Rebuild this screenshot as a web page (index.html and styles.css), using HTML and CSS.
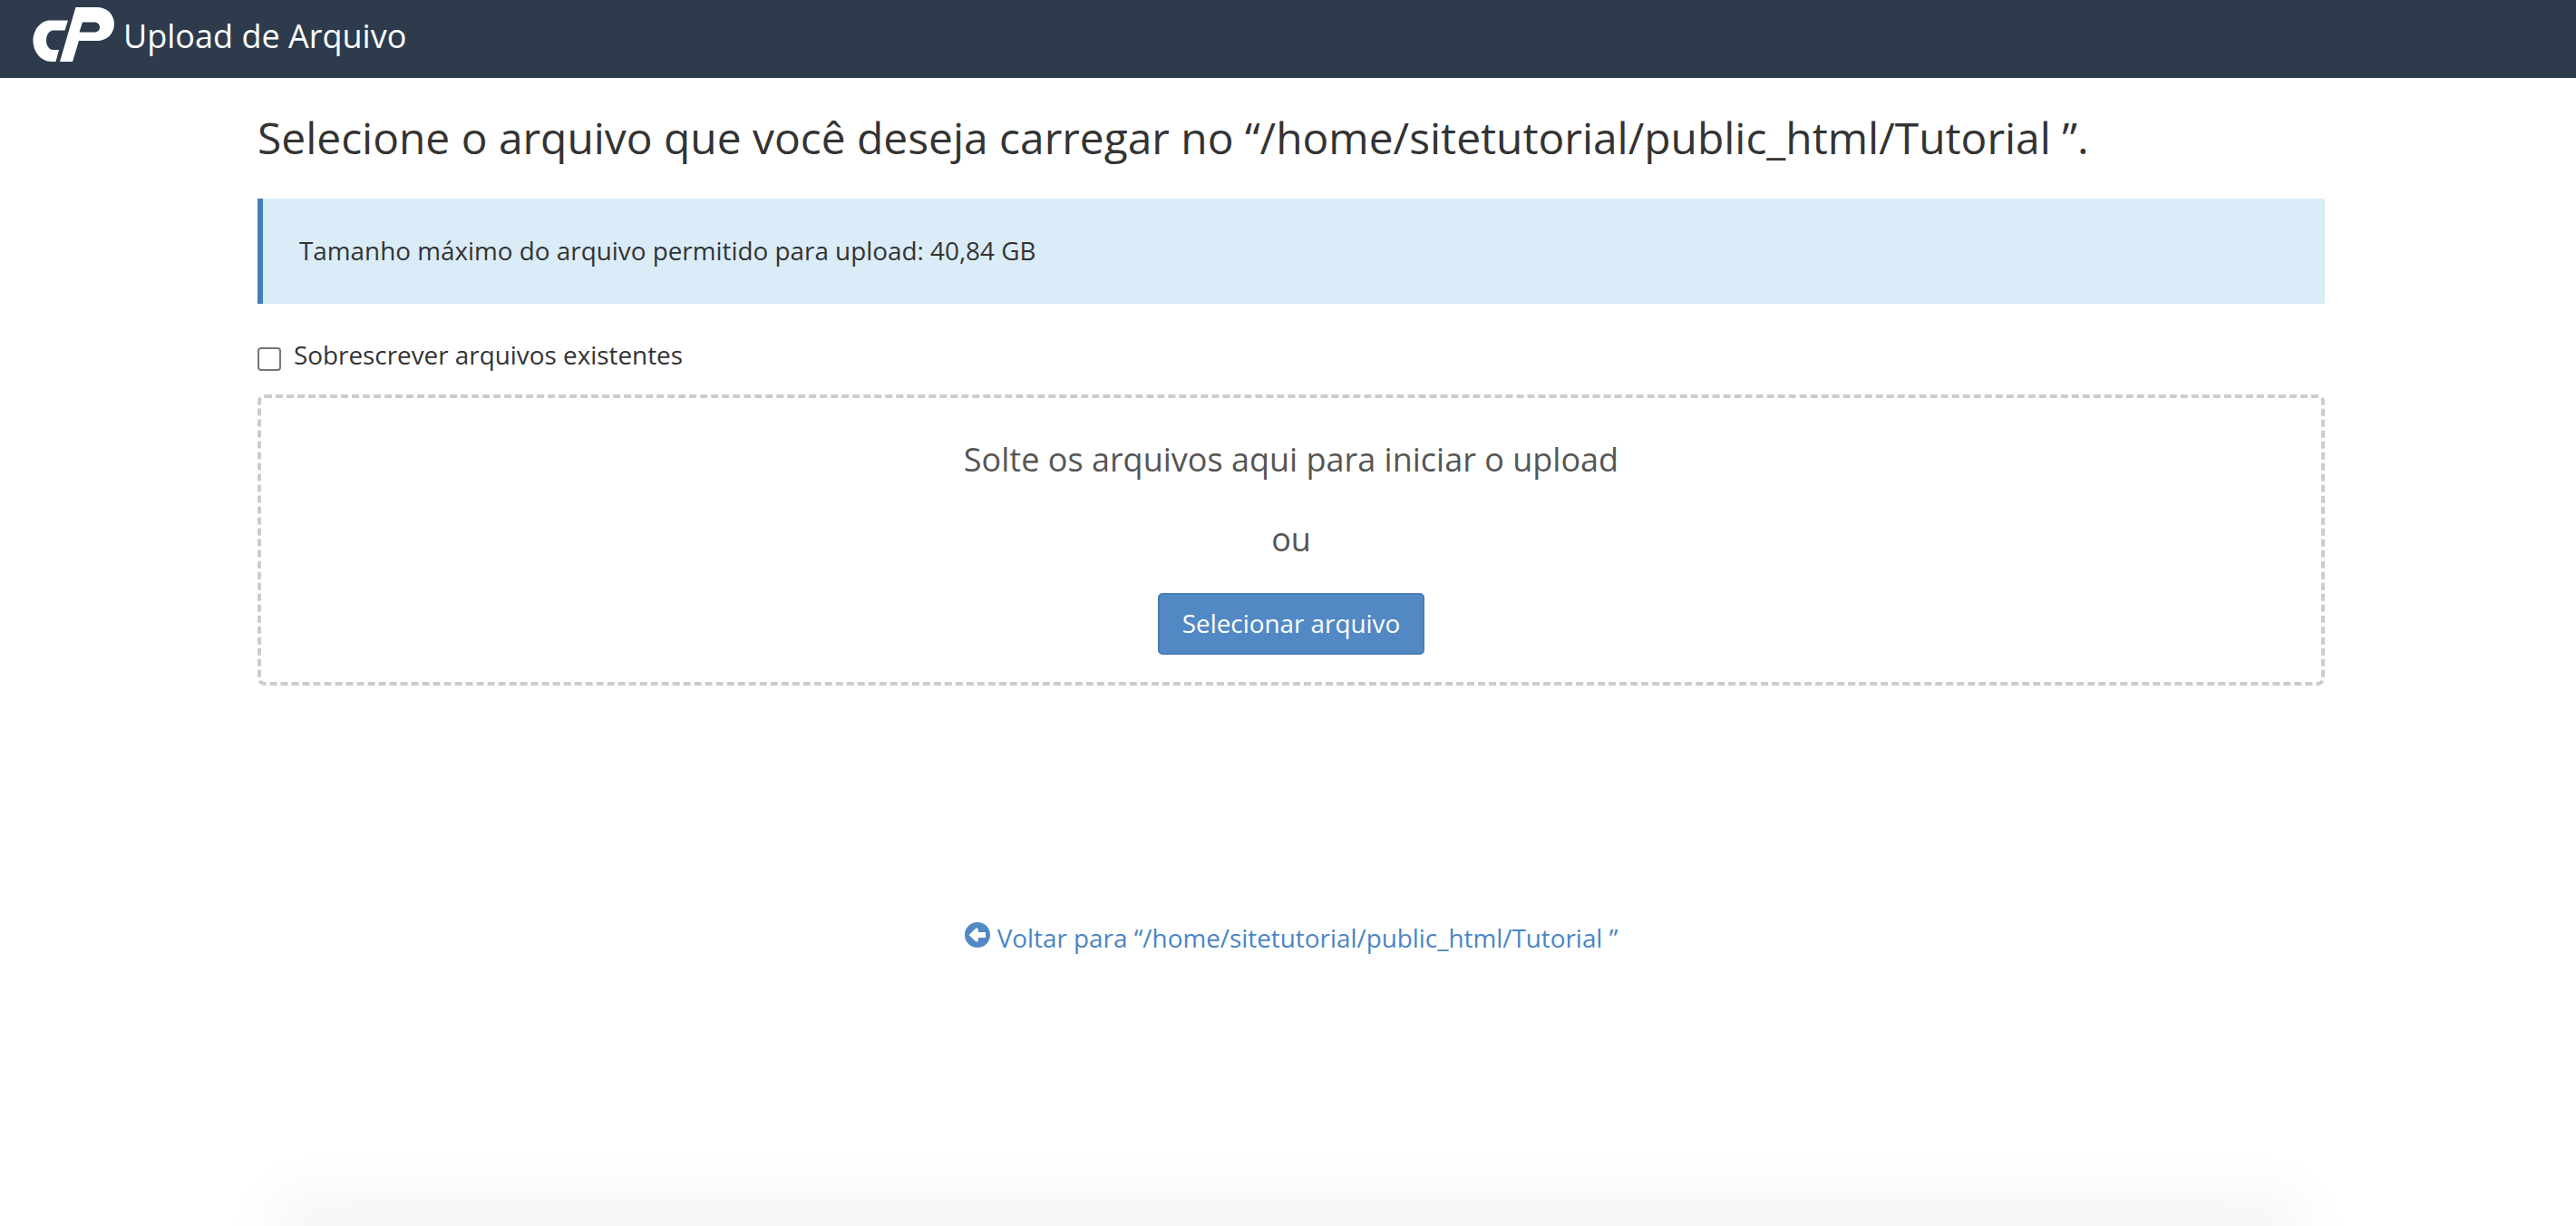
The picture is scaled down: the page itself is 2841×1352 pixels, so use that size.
FILE: index.html
```html
<!DOCTYPE html>
<html lang="pt-BR">
<head>
  <meta charset="UTF-8">
  <title>Upload de Arquivo</title>
  <link rel="stylesheet" href="styles.css">
</head>
<body>
  <header class="topbar">
    <svg class="logo" viewBox="0 0 90 60" aria-hidden="true">
      <path fill="#fff" d="M19 14.500H39L35.500 25.500H23C18 25.500 15 31 15 36.500C15 42 18 47 23 47H29L25.500 60H21C9 60 0.500 49 0.500 37C0.500 25 9 14.500 19 14.500Z"/>
      <path fill="#fff" fill-rule="evenodd" d="M47.500 0H71C82 0 90 8 90 18.500C90 29 82 37 71 37H51L44 60H30ZM55 16.500L51.500 27.500H68C72 27.500 74 25 74 22C74 19 72 16.500 68 16.500Z"/>
    </svg>
    <span class="topbar-title">Upload de Arquivo</span>
  </header>

  <main class="content">
    <h1>Selecione o arquivo que você deseja carregar no “/home/sitetutorial/public_html/Tutorial ”.</h1>

    <div class="alert">Tamanho máximo do arquivo permitido para upload: 40,84 GB</div>

    <label class="overwrite">
      <input type="checkbox">
      <span>Sobrescrever arquivos existentes</span>
    </label>

    <div class="dropzone">
      <div class="drop-text">Solte os arquivos aqui para iniciar o upload</div>
      <div class="drop-or">ou</div>
      <button class="btn-select">Selecionar arquivo</button>
    </div>

    <a class="back-link" href="#">
      <svg class="back-icon" viewBox="0 0 28 28" aria-hidden="true">
        <circle cx="14" cy="14" r="14" fill="#5289c4"/>
        <path fill="#fff" d="M4.500 14L13 6L15 8V11H23V17H15V20L13 22Z"/>
      </svg>
      Voltar para “/home/sitetutorial/public_html/Tutorial ”
    </a>
  </main>

  <div class="bottom-shadow"></div>
</body>
</html>
```

FILE: styles.css
```css
html, body {
  height: 100%;
}

body {
  margin: 0;
  display: flex;
  flex-direction: column;
  overflow: hidden;
  font-family: "Open Sans", sans-serif;
  color: #333;
  background-color: #fff;
}

.topbar {
  display: flex;
  align-items: center;
  flex-shrink: 0;
  height: 86px;
  padding-left: 36px;
  background-color: #2d3b4d;
  color: #fff;
}

.logo {
  width: 90px;
  height: 60px;
  margin-top: -10px;
}

.topbar-title {
  margin: -8px 0 0 10px;
  font-size: 36px;
}

.content {
  flex: 1;
  display: flex;
  flex-direction: column;
  width: 2280px;
  margin-left: 284px;
}

h1 {
  margin: 33px 0 0;
  font-size: 47.9px;
  line-height: 66px;
  font-weight: 400;
}

.alert {
  margin-top: 34px;
  padding: 39px 40px 41px;
  height: 36px;
  line-height: 36px;
  border-left: 6px solid #4180b8;
  background-color: #daecf8;
  font-size: 27.85px;
}

.overwrite {
  display: flex;
  align-items: center;
  margin-top: 38px;
  height: 36px;
  font-size: 27.85px;
}

.overwrite input {
  appearance: none;
  box-sizing: border-box;
  width: 26px;
  height: 26px;
  margin: 10px 14px 0 0;
  background-color: #fff;
  border: 2px solid #767676;
  border-radius: 4px;
}

.dropzone {
  display: flex;
  flex-direction: column;
  align-items: center;
  margin-top: 26px;
  height: 313px;
  border: 4px dashed #ccc;
  border-radius: 8px;
}

.drop-text {
  margin-top: 44px;
  font-size: 36px;
  line-height: 48px;
  color: #555;
}

.drop-or {
  margin-top: 40px;
  font-size: 36px;
  line-height: 48px;
  color: #555;
}

.btn-select {
  margin-top: 35px;
  width: 294px;
  height: 68px;
  padding: 0 0 2px;
  font-family: inherit;
  font-size: 27.85px;
  color: #fff;
  background-color: #5289c4;
  border: 2px solid #4a7db5;
  border-radius: 5px;
}

.back-link {
  display: flex;
  align-items: center;
  justify-content: center;
  margin-top: 260px;
  font-size: 27.85px;
  line-height: 36px;
  color: #4a85c4;
  text-decoration: none;
}

.back-icon {
  width: 28px;
  height: 28px;
  margin: -6px 8px 0 0;
}

.bottom-shadow {
  flex-shrink: 0;
  height: 0;
  margin: 0 330px;
  box-shadow: 0 0 70px 25px rgba(0, 0, 0, 0.065);
}
```
